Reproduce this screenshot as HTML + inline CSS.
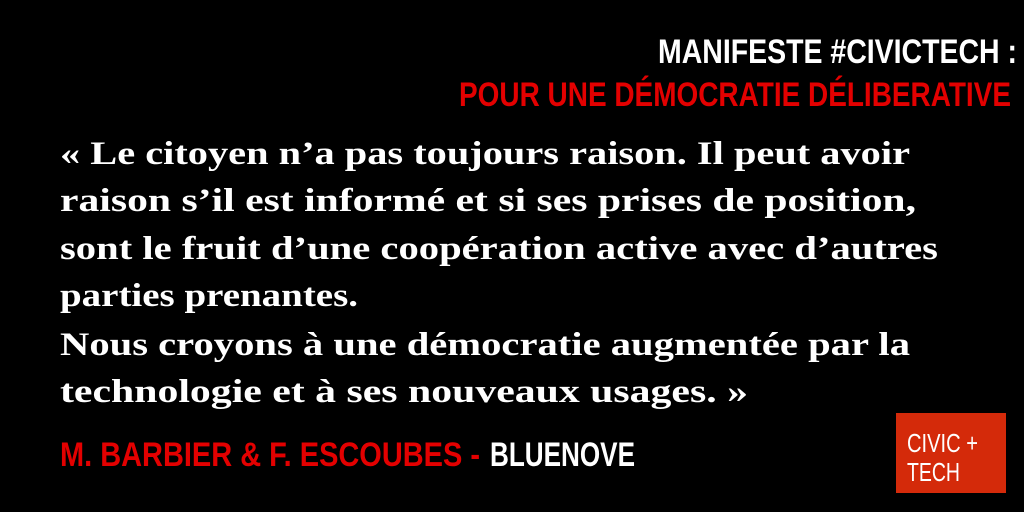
<!DOCTYPE html>
<html><head><meta charset="utf-8"><style>
html,body{margin:0;padding:0;background:#000;width:1024px;height:512px;overflow:hidden}
svg{display:block}
.h{font-family:"Liberation Sans Narrow","Liberation Sans",sans-serif;font-weight:bold;font-size:34px}
.q{font-family:"Liberation Serif",serif;font-weight:bold;font-size:33px;fill:#fff}
</style></head><body>
<svg width="1024" height="512" xmlns="http://www.w3.org/2000/svg">
<rect width="1024" height="512" fill="#000"/>
<text class="h" x="658" y="63" fill="#fff" textLength="359" lengthAdjust="spacingAndGlyphs">MANIFESTE #CIVICTECH :</text>
<text class="h" x="459" y="106" fill="#e30000" font-size="36" textLength="552" lengthAdjust="spacingAndGlyphs">POUR UNE DÉMOCRATIE DÉLIBERATIVE</text>
<text class="q" x="60" y="164" textLength="850" lengthAdjust="spacingAndGlyphs">« Le citoyen n’a pas toujours raison. Il peut avoir</text>
<text class="q" x="60" y="211" textLength="856" lengthAdjust="spacingAndGlyphs">raison s’il est informé et si ses prises de position,</text>
<text class="q" x="60" y="259" textLength="878" lengthAdjust="spacingAndGlyphs">sont le fruit d’une coopération active avec d’autres</text>
<text class="q" x="60" y="306" textLength="298" lengthAdjust="spacingAndGlyphs">parties prenantes.</text>
<text class="q" x="60" y="355" textLength="850" lengthAdjust="spacingAndGlyphs">Nous croyons à une démocratie augmentée par la</text>
<text class="q" x="60" y="402" textLength="688" lengthAdjust="spacingAndGlyphs">technologie et à ses nouveaux usages.  »</text>
<text class="h" x="60" y="466" fill="#e30000" font-size="35" textLength="420" lengthAdjust="spacingAndGlyphs">M. BARBIER &amp; F. ESCOUBES -</text>
<text class="h" x="490" y="466" fill="#fff" font-size="35" textLength="145" lengthAdjust="spacingAndGlyphs">BLUENOVE</text>
<rect x="896" y="413" width="110" height="80" fill="#d42a0a"/>
<text x="907" y="452" fill="#fff" font-family="Liberation Sans Narrow,Liberation Sans,sans-serif" font-size="26" textLength="71" lengthAdjust="spacingAndGlyphs">CIVIC +</text>
<text x="907" y="481" fill="#fff" font-family="Liberation Sans Narrow,Liberation Sans,sans-serif" font-size="26" textLength="53" lengthAdjust="spacingAndGlyphs">TECH</text>
</svg>
</body></html>
